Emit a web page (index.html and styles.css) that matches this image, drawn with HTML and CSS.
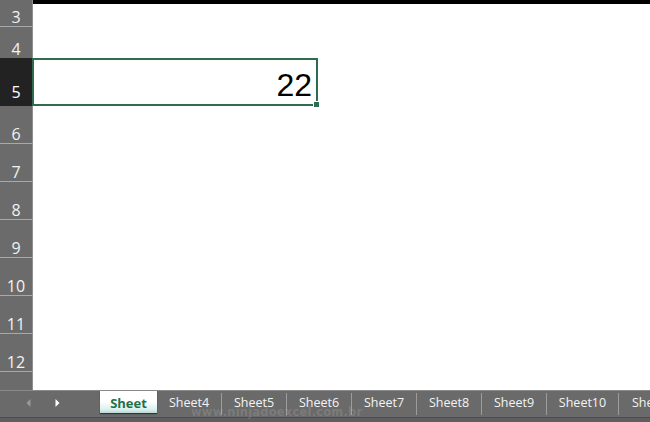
FILE: index.html
```html
<!DOCTYPE html>
<html>
<head>
<meta charset="utf-8">
<link rel="stylesheet" href="styles.css">
</head>
<body>
<div class="app">
  <div class="grid">
    <div class="row r3"><div class="hdr">3</div><div class="cells top-edge"></div></div>
    <div class="row r4"><div class="hdr">4</div><div class="cells"></div></div>
    <div class="row r5"><div class="hdr sel">5</div><div class="cells"><div class="active">22<span class="handle"></span></div></div></div>
    <div class="row std"><div class="hdr">6</div><div class="cells"></div></div>
    <div class="row std"><div class="hdr">7</div><div class="cells"></div></div>
    <div class="row std"><div class="hdr">8</div><div class="cells"></div></div>
    <div class="row std"><div class="hdr">9</div><div class="cells"></div></div>
    <div class="row std"><div class="hdr">10</div><div class="cells"></div></div>
    <div class="row std"><div class="hdr">11</div><div class="cells"></div></div>
    <div class="row std"><div class="hdr">12</div><div class="cells"></div></div>
    <div class="row r13"><div class="hdr nolab"></div><div class="cells"></div></div>
  </div>
  <div class="tabbar">
    <div class="nav">
      <svg class="arrow" width="5" height="8" viewBox="0 0 5 8"><polygon points="4.5,0 0.5,4 4.5,8" fill="#9a9a9a"/></svg>
      <svg class="arrow" width="5" height="8" viewBox="0 0 5 8"><polygon points="0.5,0 4.5,4 0.5,8" fill="#ffffff"/></svg>
    </div>
    <div class="tab current">Sheet</div>
    <div class="tab">Sheet4</div>
    <div class="tab">Sheet5</div>
    <div class="tab">Sheet6</div>
    <div class="tab">Sheet7</div>
    <div class="tab">Sheet8</div>
    <div class="tab">Sheet9</div>
    <div class="tab wide">Sheet10</div>
    <div class="tab last">Sheet11</div>
    <div class="watermark">www.ninjadoexcel.com.br</div>
  </div>
</div>
</body>
</html>
```

FILE: styles.css
```css
html, body {
  margin: 0;
  padding: 0;
}
body {
  width: 650px;
  height: 422px;
  overflow: hidden;
  background: #ffffff;
  font-family: "Open Sans", "DejaVu Sans", sans-serif;
}
.app {
  display: flex;
  flex-direction: column;
  width: 650px;
  height: 422px;
}
.grid {
  display: flex;
  flex-direction: column;
  height: 390px;
  overflow: hidden;
}
.row {
  display: flex;
  flex: none;
}
.r3 { height: 27px; }
.r4 { height: 31px; }
.r5 { height: 48px; }
.std { height: 38px; }
.r13 { height: 18px; }
.hdr {
  width: 33px;
  flex: none;
  box-sizing: border-box;
  background: #6b6b6b;
  border-right: 1px solid #8e8e8e;
  border-bottom: 1px solid #a9a9a9;
  color: #f2f2f2;
  font-size: 16px;
  line-height: 1;
  display: flex;
  align-items: flex-end;
  justify-content: center;
  padding-bottom: 1px;
}
.r4 .hdr { border-bottom: none; }
.hdr.sel {
  background: #222222;
  color: #ffffff;
  border-bottom: none;
  padding-bottom: 6px;
}
.hdr.nolab { border-bottom: none; }
.cells {
  flex: 1;
  background: #ffffff;
}
.top-edge {
  border-top: 4px solid #000000;
}
.active {
  position: relative;
  width: 286px;
  height: 48px;
  margin-left: -1px;
  box-sizing: border-box;
  border: 2px solid #2f6b4e;
  font-family: "Liberation Sans", Arial, sans-serif;
  font-size: 32px;
  line-height: 36px;
  color: #000000;
  display: flex;
  align-items: flex-end;
  justify-content: flex-end;
  padding-right: 4px;
  padding-bottom: 1px;
}
.handle {
  position: absolute;
  right: -4px;
  bottom: -4px;
  width: 5px;
  height: 5px;
  background: #2f6b4e;
  border: 1px solid #ffffff;
  box-sizing: content-box;
}
.tabbar {
  position: relative;
  flex: none;
  height: 32px;
  box-sizing: border-box;
  display: flex;
  align-items: flex-start;
  background: linear-gradient(#6a6a6a 0, #6a6a6a 26px, #4d4d4d 26px, #4d4d4d 27px, #5e5e5e 27px);
  border-top: 1px solid #8a8a8a;
  overflow: hidden;
}
.nav {
  width: 100px;
  flex: none;
  display: flex;
  align-items: center;
  height: 24px;
  padding-left: 26px;
  box-sizing: border-box;
  gap: 24px;
}
.arrow { display: block; }
.tab {
  flex: none;
  width: 65px;
  height: 22px;
  margin-top: 2px;
  box-sizing: border-box;
  border-right: 1px solid #9c9c9c;
  color: #f4f4f4;
  font-size: 12.5px;
  line-height: 20px;
  text-align: center;
  white-space: nowrap;
}
.tab.wide { width: 72px; }
.tab.last {
  border-right: none;
  text-align: left;
  padding-left: 13px;
}
.tab.current {
  width: 57px;
  height: 23px;
  margin-top: -1px;
  border-right: none;
  background: linear-gradient(#ffffff 0%, #ffffff 50%, #dbefee 85%, #b9d9d3 100%);
  box-shadow: 0 1px 1px rgba(0, 0, 0, 0.5);
  color: #217346;
  font-weight: bold;
  font-size: 13px;
  line-height: 26px;
}
.watermark {
  position: absolute;
  left: 191px;
  top: 14px;
  color: rgba(255, 255, 255, 0.13);
  font-family: "DejaVu Sans", sans-serif;
  font-weight: bold;
  font-size: 11.5px;
  letter-spacing: 0.2px;
  line-height: 14px;
}
```
